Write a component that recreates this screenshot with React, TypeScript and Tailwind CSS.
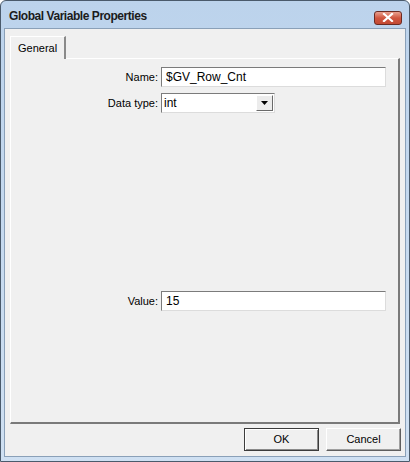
import React from "react";

export default function App() {
  const font = { fontFamily: '"Liberation Sans", Arial, sans-serif' };
  return (
    <div
      className="w-[410px] h-[462px] flex flex-col border border-[#4a5a6b] bg-gradient-to-b from-[#bcd3ec] to-[#cfe0f2] rounded-t-[6px] overflow-hidden"
      style={font}
    >
      {/* Title bar */}
      <div className="h-[27px] flex items-center justify-between pl-[8px] pr-[7px] shrink-0">
        <span className="text-[12px] font-bold text-[#1b1b1b] tracking-[-0.45px] mt-[3px]">
          Global Variable Properties
        </span>
        <div className="w-[28px] h-[14px] mt-[6px] rounded-[3px] border border-[#6b2a22] bg-gradient-to-b from-[#e8a08f] via-[#d0553f] to-[#c24a33] flex items-center justify-center">
          <svg width="12" height="9" viewBox="0 0 12 9">
            <path d="M2 1 L10 8 M10 1 L2 8" stroke="#ffffff" strokeWidth="2.2" strokeLinecap="square" />
          </svg>
        </div>
      </div>

      {/* Client area */}
      <div className="flex-1 mx-[3px] mb-[4px] bg-[#f0f0f0] border border-[#8aa0b8] flex flex-col text-[11px] text-black">
        {/* Tabs row */}
        <div className="flex pl-[5px] pt-[7px] h-[30px] shrink-0">
          <div className="relative z-10 h-[23px] px-[7px] bg-[#f0f0f0] border-l border-t border-white border-r-2 border-r-[#8a8a8a] flex items-center">
            <span className="pt-[1px]">General</span>
          </div>
        </div>
        {/* Panel */}
        <div className="-mt-[1px] mx-[5px] h-[366px] border-t border-l border-white border-r-2 border-r-[#7a7a7a] border-b-2 border-b-[#7a7a7a] flex flex-col pt-[8px]">
          <div className="flex items-center h-[20px]">
            <div className="w-[150px] text-right pr-[3px]">Name:</div>
            <div className="w-[225px] h-[20px] bg-white border-t border-l border-[#7b7b7b] border-b border-r border-b-[#dcdcdc] border-r-[#dcdcdc] flex items-center px-[4px] text-[12px]">
              $GV_Row_Cnt
            </div>
          </div>
          <div className="flex items-center h-[20px] mt-[6px]">
            <div className="w-[150px] text-right pr-[3px]">Data type:</div>
            <div className="w-[114px] h-[20px] bg-white border-t border-l border-[#7b7b7b] border-b border-r border-b-[#dcdcdc] border-r-[#dcdcdc] flex items-center justify-between">
              <span className="pl-[2px] text-[12px]">int</span>
              <div className="w-[17px] h-[16px] mr-[1px] bg-[#ececec] border border-t-white border-l-white border-b-[#6a6a6a] border-r-[#6a6a6a] flex items-center justify-center">
                <svg width="7" height="4" viewBox="0 0 7 4">
                  <path d="M0 0 H7 L3.5 4 Z" fill="#000" />
                </svg>
              </div>
            </div>
          </div>
          <div className="flex items-center h-[20px] mt-[178px]">
            <div className="w-[150px] text-right pr-[3px]">Value:</div>
            <div className="w-[225px] h-[20px] bg-white border-t border-l border-[#7b7b7b] border-b border-r border-b-[#dcdcdc] border-r-[#dcdcdc] flex items-center px-[4px] text-[12px]">
              15
            </div>
          </div>
        </div>
        {/* Buttons */}
        <div className="flex justify-end gap-[7px] pr-[4px] mt-[4px]">
          <div className="w-[75px] h-[23px] border border-[#3c3c3c] bg-[#f0f0f0] flex items-center justify-center shadow-[inset_1px_1px_0_#ffffff,inset_-1px_-1px_0_#8a8a8a]">
            OK
          </div>
          <div className="w-[75px] h-[23px] border border-t-white border-l-white border-b-[#5e5e5e] border-r-[#5e5e5e] bg-[#f0f0f0] flex items-center justify-center shadow-[inset_-1px_-1px_0_#a0a0a0]">
            Cancel
          </div>
        </div>
      </div>
    </div>
  );
}
